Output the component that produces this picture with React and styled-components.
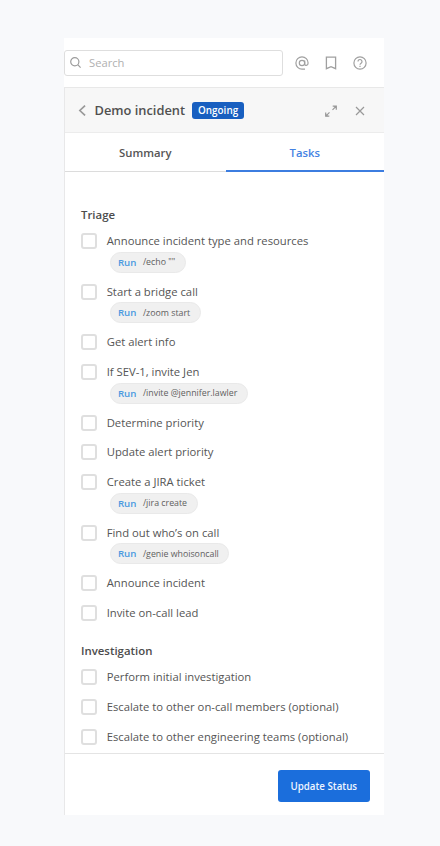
import React from "react";
import styled, { createGlobalStyle } from "styled-components";

const GlobalStyle = createGlobalStyle`
  * { box-sizing: border-box; }
  body { margin: 0; background: #f8f9fb; font-family: "Open Sans", "Noto Sans", sans-serif; color: #515151; }
  button, input { font-family: inherit; }
`;

const Page = styled.div`
  min-height: 846px;
  padding: 38px 56px 31px 64px;
`;

const Window = styled.main`
  width: 320px;
  height: 777px;
  display: flex;
  flex-direction: column;
  background: #fff;
`;

const TopBar = styled.div`
  height: 49px;
  flex: none;
  display: flex;
  align-items: center;
  padding: 0 17px 0 0;
`;

const SearchBox = styled.label`
  width: 219px;
  height: 26px;
  display: flex;
  align-items: center;
  gap: 8.5px;
  padding-left: 4.5px;
  border: 1px solid #dedede;
  border-radius: 3px;
  color: #9c9c9c;
`;

const SearchInput = styled.input`
  width: 180px;
  padding: 0;
  border: 0;
  outline: 0;
  background: transparent;
  font-size: 11.2px;
  color: #515151;
  &::placeholder { color: #b0b0b0; opacity: 1; }
`;

const TopIcons = styled.div`
  margin-left: auto;
  padding-top: 1px;
  display: flex;
  gap: 15px;
  color: #a0a0a0;
`;

const Icon = styled.svg`
  display: block;
  flex: none;
  width: ${(p) => p.$size}px;
  height: ${(p) => p.$size}px;
  fill: none;
  stroke: currentColor;
  stroke-width: ${(p) => p.$stroke || 1.2};
`;

const Panel = styled.section`
  flex: 1;
  min-height: 0;
  display: flex;
  flex-direction: column;
  border-left: 1px solid #e8e8e9;
`;

const PanelHeader = styled.header`
  height: 46px;
  flex: none;
  display: flex;
  align-items: center;
  padding: 0 17px 0 11.5px;
  background: #f7f7f7;
  border-top: 1px solid #e8e8e8;
  border-bottom: 1px solid #ececec;
  color: #999;
`;

const Title = styled.h1`
  margin: 0 7px 0 7px;
  font-size: 12.85px;
  line-height: 20px;
  font-weight: 560;
  color: #505050;
  white-space: nowrap;
`;

const Badge = styled.span`
  height: 17px;
  padding: 0 6px;
  border-radius: 3px;
  background: #185fc0;
  color: #fff;
  font-size: 9.9px;
  line-height: 17px;
  font-weight: 600;
`;

const HeaderActions = styled.div`
  margin-left: auto;
  padding-top: 2px;
  display: flex;
  gap: 15px;
`;

const Tabs = styled.nav`
  height: 39px;
  flex: none;
  display: grid;
  grid-template-columns: 160.5px 1fr;
`;

const Tab = styled.button`
  padding: ${(p) => (p.$active ? "1px 0 0" : "0")};
  border: 0;
  background: transparent;
  font-size: 11.3px;
  font-weight: 600;
  color: ${(p) => (p.$active ? "#4482e3" : "#555")};
  border-bottom: ${(p) => (p.$active ? "2px solid #3c7de0" : "1px solid #dcdcdc")};
`;

const TaskArea = styled.div`
  flex: 1;
  min-height: 0;
  overflow: hidden;
  padding: 33.1px 16px 0;
`;

const Checklist = styled.section`
  margin-bottom: 8.5px;
`;

const SectionTitle = styled.h2`
  margin: 0 0 6px;
  font-size: 11.4px;
  line-height: 20px;
  font-weight: 600;
  color: #4c4c4c;
`;

const TaskItem = styled.div`
  padding-bottom: 9.68px;
`;

const TaskLabel = styled.label`
  height: 20px;
  display: flex;
  align-items: center;
  gap: 9.7px;
  font-size: 11.28px;
  line-height: 20px;
  white-space: nowrap;
  color: #555;
`;

const Checkbox = styled.input`
  appearance: none;
  flex: none;
  margin: 0;
  width: 16px;
  height: 16px;
  border: 2px solid #dfdfdf;
  border-radius: 3px;
  background: #fff;
`;

const Command = styled.div`
  width: fit-content;
  height: 21px;
  margin: 0.7px 0 -0.7px 29.4px;
  padding: 0 9.5px 0 6.5px;
  display: flex;
  align-items: center;
  gap: 6.5px;
  border: 1px solid #e9e9e9;
  border-radius: 11px;
  background: #f0f0f0;
  white-space: nowrap;
`;

const RunLink = styled.span`
  font-size: 9.7px;
  font-weight: 600;
  color: #4a9ae0;
`;

const CommandText = styled.span`
  font-size: 8.8px;
  color: #606060;
`;

const Footer = styled.footer`
  height: 62px;
  flex: none;
  display: flex;
  align-items: center;
  justify-content: flex-end;
  padding: 3px 14.5px 0 0;
  border-top: 1px solid #e4e4e4;
`;

const UpdateButton = styled.button`
  width: 91.5px;
  height: 32px;
  padding: 0;
  border: 0;
  border-radius: 3px;
  background: #1b6edc;
  color: #eef5ff;
  font-size: 9.75px;
  font-weight: 600;
`;

const checklists = [
  {
    title: "Triage",
    tasks: [
      { text: "Announce incident type and resources", command: '/echo ""' },
      { text: "Start a bridge call", command: "/zoom start" },
      { text: "Get alert info" },
      { text: "If SEV-1, invite Jen", command: "/invite @jennifer.lawler" },
      { text: "Determine priority" },
      { text: "Update alert priority" },
      { text: "Create a JIRA ticket", command: "/jira create" },
      { text: "Find out who’s on call", command: "/genie whoisoncall" },
      { text: "Announce incident" },
      { text: "Invite on-call lead" },
    ],
  },
  {
    title: "Investigation",
    tasks: [
      { text: "Perform initial investigation" },
      { text: "Escalate to other on-call members (optional)" },
      { text: "Escalate to other engineering teams (optional)" },
    ],
  },
];

function Task({ text, command }) {
  return (
    <TaskItem>
      <TaskLabel>
        <Checkbox type="checkbox" />
        {text}
      </TaskLabel>
      {command && (
        <Command>
          <RunLink>Run</RunLink>
          <CommandText>{command}</CommandText>
        </Command>
      )}
    </TaskItem>
  );
}

export default function App() {
  return (
    <Page>
      <GlobalStyle />
      <Window>
        <TopBar>
          <SearchBox>
            <Icon $size={11} viewBox="0 0 11 11">
              <circle cx="4.8" cy="4.8" r="4.1" />
              <path d="M7.7 7.7 10.6 10.6" />
            </Icon>
            <SearchInput placeholder="Search" />
          </SearchBox>
          <TopIcons>
            <Icon $size={14} viewBox="0 0 14 14">
              <circle cx="7" cy="7" r="2.7" />
              <path d="M9.7 4.4V7.7C9.7 10.2 13.1 10.1 13.1 7A6.1 6.1 0 1 0 7 13.1H10" />
            </Icon>
            <Icon $size={14} viewBox="0 0 14 14" $stroke={1.3}>
              <path d="M2.4 1.1H11.6V12.7L7 10.6L2.4 12.7Z" />
            </Icon>
            <Icon $size={14} viewBox="0 0 14 14">
              <circle cx="7" cy="7" r="6.1" />
              <path d="M5 5.6A2 2 0 1 1 8.1 7.2Q7 7.9 7 8.8M7 9.8V11" />
            </Icon>
          </TopIcons>
        </TopBar>
        <Panel>
          <PanelHeader>
            <Icon $size={11} viewBox="0 0 11 12" $stroke={1.8}>
              <path d="M8.3.6 2.6 6 8.3 11.4" />
            </Icon>
            <Title>Demo incident</Title>
            <Badge>Ongoing</Badge>
            <HeaderActions>
              <Icon $size={14} viewBox="0 0 14 14">
                <path d="M8.7 2.1H12.3V5.7M12 2.4 8.5 5.9M1.7 8.6V12.2H5.3M2 11.9 5.5 8.4" />
                <path d="M9.8 2.1H12.3V4.6ZM1.7 9.7V12.2H4.2Z" fill="currentColor" stroke="none" />
              </Icon>
              <Icon $size={14} viewBox="0 0 14 14">
                <path d="M3 3 11 11M11 3 3 11" />
              </Icon>
            </HeaderActions>
          </PanelHeader>
          <Tabs>
            <Tab>Summary</Tab>
            <Tab $active>Tasks</Tab>
          </Tabs>
          <TaskArea>
            {checklists.map((list) => (
              <Checklist key={list.title}>
                <SectionTitle>{list.title}</SectionTitle>
                {list.tasks.map((task) => (
                  <Task key={task.text} {...task} />
                ))}
              </Checklist>
            ))}
          </TaskArea>
          <Footer>
            <UpdateButton>Update Status</UpdateButton>
          </Footer>
        </Panel>
      </Window>
    </Page>
  );
}
